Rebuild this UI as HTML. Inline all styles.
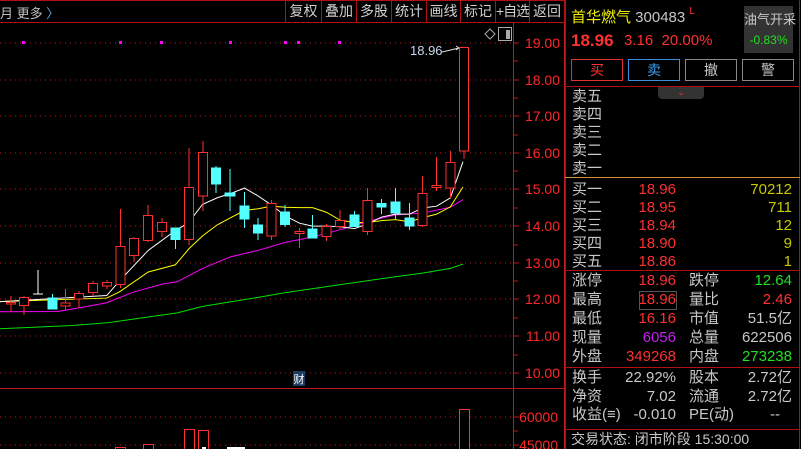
<!DOCTYPE html><html><head><meta charset="utf-8"><style>
*{margin:0;padding:0;box-sizing:border-box}
body{width:801px;height:449px;background:#000;overflow:hidden;position:relative;font-family:"Liberation Sans","Noto Sans CJK SC",sans-serif;color:#c8c8c8}
.a{position:absolute;white-space:nowrap}
.tb{position:absolute;top:1px;height:21px;border-left:1px solid #b01010;font-size:14px;line-height:21px;text-align:center;color:#d0d0d0;white-space:nowrap;overflow:hidden}
.r{color:#ff3030}.g{color:#20e020}.y{color:#c8c800}
.row{position:absolute;left:572px;font-size:15px;line-height:18px;white-space:nowrap}
.v{position:absolute;text-align:right;font-size:15px;line-height:18px;white-space:nowrap}
</style></head><body>
<div class="a" style="left:0;top:0;width:565px;height:1px;background:#b01010"></div>
<div class="a" style="left:0;top:22px;width:565px;height:1px;background:#b01010"></div>
<div class="a" style="left:0;top:3px;font-size:13px;color:#c0c0c0">月 更多 <span style="color:#6aa0e0">〉</span></div>
<div class="tb" style="left:285px;width:36px">复权</div>
<div class="tb" style="left:321px;width:35px">叠加</div>
<div class="tb" style="left:356px;width:35px">多股</div>
<div class="tb" style="left:391px;width:35px">统计</div>
<div class="tb" style="left:426px;width:34px">画线</div>
<div class="tb" style="left:460px;width:35px">标记</div>
<div class="tb" style="left:495px;width:34px;letter-spacing:-1px">+自选</div>
<div class="tb" style="left:529px;width:36px;border-right:1px solid #b01010">返回</div>
<svg class="a" style="left:0;top:0" width="565" height="449">
<g stroke="#c01818" stroke-dasharray="1 4" stroke-width="1">
<line x1="0" y1="43" x2="513" y2="43"/><line x1="0" y1="80" x2="513" y2="80"/><line x1="0" y1="116" x2="513" y2="116"/><line x1="0" y1="153" x2="513" y2="153"/><line x1="0" y1="189" x2="513" y2="189"/><line x1="0" y1="226" x2="513" y2="226"/><line x1="0" y1="263" x2="513" y2="263"/><line x1="0" y1="299" x2="513" y2="299"/><line x1="0" y1="336" x2="513" y2="336"/><line x1="0" y1="373" x2="513" y2="373"/><line x1="0" y1="417" x2="513" y2="417"/><line x1="0" y1="445" x2="513" y2="445"/></g>
<line x1="513.5" y1="22" x2="513.5" y2="449" stroke="#c01818"/>
<line x1="564.5" y1="22" x2="564.5" y2="449" stroke="#c01818"/>
<line x1="0" y1="388.5" x2="565" y2="388.5" stroke="#c01818"/>
<g stroke="#c01818">
<line x1="514" y1="43" x2="519" y2="43"/><line x1="514" y1="61" x2="518" y2="61"/><line x1="514" y1="80" x2="519" y2="80"/><line x1="514" y1="98" x2="518" y2="98"/><line x1="514" y1="116" x2="519" y2="116"/><line x1="514" y1="135" x2="518" y2="135"/><line x1="514" y1="153" x2="519" y2="153"/><line x1="514" y1="171" x2="518" y2="171"/><line x1="514" y1="189" x2="519" y2="189"/><line x1="514" y1="208" x2="518" y2="208"/><line x1="514" y1="226" x2="519" y2="226"/><line x1="514" y1="245" x2="518" y2="245"/><line x1="514" y1="263" x2="519" y2="263"/><line x1="514" y1="281" x2="518" y2="281"/><line x1="514" y1="299" x2="519" y2="299"/><line x1="514" y1="318" x2="518" y2="318"/><line x1="514" y1="336" x2="519" y2="336"/><line x1="514" y1="355" x2="518" y2="355"/><line x1="514" y1="373" x2="519" y2="373"/><line x1="514" y1="417" x2="519" y2="417"/><line x1="514" y1="431" x2="518" y2="431"/><line x1="514" y1="445" x2="519" y2="445"/></g>
<g fill="#ff2828" font-size="14" font-family="Liberation Sans" text-anchor="end">
<text x="560" y="48">19.00</text><text x="560" y="85">18.00</text><text x="560" y="121">17.00</text><text x="560" y="158">16.00</text><text x="560" y="194">15.00</text><text x="560" y="231">14.00</text><text x="560" y="268">13.00</text><text x="560" y="304">12.00</text><text x="560" y="341">11.00</text><text x="560" y="378">10.00</text><text x="558" y="422">60000</text><text x="558" y="450">45000</text></g>
<g fill="#ff00ff"><rect x="22" y="41" width="3" height="3"/><rect x="119" y="41" width="3" height="3"/><rect x="160" y="41" width="3" height="3"/><rect x="229" y="41" width="3" height="3"/><rect x="284" y="41" width="3" height="3"/><rect x="297" y="41" width="3" height="3"/><rect x="338" y="41" width="3" height="3"/></g>
<path d="M485 34l5-5 5 5-5 5z" fill="none" stroke="#aaa"/>
<rect x="498.5" y="27.5" width="13" height="13" fill="none" stroke="#aaa"/><rect x="506" y="30" width="4" height="9" fill="#aaa"/>
<text x="410" y="55" fill="#c8d8f0" font-size="13" font-family="Liberation Sans">18.96</text>
<path d="M442 52L459 48M456 46l3 2-3 2" stroke="#ddd" fill="none"/>
<g transform="translate(0,140) scale(0.3617)" fill="none">
<polyline vector-effect="non-scaling-stroke" stroke="#00e000" points="0,522 200,513 300,505 490,478 560,460 714,435 789,422 941,400 1093,378 1168,368 1245,355 1280,343"/>
<polyline vector-effect="non-scaling-stroke" stroke="#ff00ff" points="0,475 160,474 230,462 295,450 370,420 450,398 490,392 560,355 637,323 714,305 789,283 864,268 941,248 1016,225 1093,207 1168,202 1245,186 1280,165"/>
<polyline vector-effect="non-scaling-stroke" stroke="#ffff00" points="0,447 295,437 330,420 410,365 485,345 523,300 560,265 600,235 637,215 676,195 714,190 751,183 789,186 828,187 864,187 903,200 941,222 980,228 1016,228 1055,223 1093,220 1132,226 1168,215 1207,205 1245,185 1280,130"/>
<polyline vector-effect="non-scaling-stroke" stroke="#ffffff" points="0,447 295,430 330,390 410,305 485,250 520,230 560,178 600,160 637,148 676,133 714,155 751,180 789,210 828,230 864,238 903,238 941,240 980,245 1016,232 1055,213 1093,205 1132,205 1168,188 1207,183 1245,160 1280,60"/>
</g>
<g stroke="#ff3030" fill="#000">
<line x1="11" y1="296" x2="11" y2="312"/><rect x="6.5" y="302.5" width="9" height="1.5"/>
<line x1="24" y1="296" x2="24" y2="315"/><rect x="19.5" y="297.5" width="9" height="8"/>
<line x1="65.5" y1="289" x2="65.5" y2="310"/><rect x="61" y="303" width="9" height="3"/>
<line x1="79" y1="291" x2="79" y2="308"/><rect x="74.5" y="293.5" width="9" height="5.5"/>
<line x1="93" y1="281" x2="93" y2="296"/><rect x="88.5" y="283.5" width="9" height="9"/>
<line x1="107" y1="280" x2="107" y2="289"/><rect x="102.5" y="282.5" width="9" height="3.5"/>
<line x1="120.5" y1="209" x2="120.5" y2="288"/><rect x="116" y="246.5" width="9" height="38"/>
<line x1="134" y1="237" x2="134" y2="262"/><rect x="129.5" y="238.5" width="9" height="17"/>
<line x1="148" y1="205" x2="148" y2="242"/><rect x="143.5" y="215.5" width="9" height="25"/>
<line x1="162" y1="218" x2="162" y2="237"/><rect x="157.5" y="222.5" width="9" height="9"/>
<line x1="189" y1="148" x2="189" y2="245"/><rect x="184.5" y="187.5" width="9" height="52"/>
<line x1="203" y1="141" x2="203" y2="211"/><rect x="198.5" y="152.5" width="9" height="43.5"/>
<line x1="271.5" y1="200" x2="271.5" y2="240"/><rect x="267" y="203.5" width="9" height="32.5"/>
<line x1="299.5" y1="228" x2="299.5" y2="248"/><rect x="295" y="231.5" width="9" height="2"/>
<line x1="326.5" y1="224" x2="326.5" y2="241"/><rect x="322" y="226.5" width="9" height="10"/>
<line x1="340" y1="210" x2="340" y2="229"/><rect x="335.5" y="220.5" width="9" height="6"/>
<line x1="367.5" y1="188" x2="367.5" y2="235"/><rect x="363" y="200.5" width="9" height="31"/>
<line x1="422.5" y1="176" x2="422.5" y2="227"/><rect x="418" y="193.5" width="9" height="32"/>
<line x1="436.5" y1="157" x2="436.5" y2="191"/><rect x="432" y="185.5" width="9" height="2"/>
<line x1="450.5" y1="151" x2="450.5" y2="198"/><rect x="446" y="162.5" width="9" height="25.5"/>
<line x1="464" y1="151" x2="464" y2="159"/><rect x="459.5" y="47.5" width="9" height="103.5"/>
</g>
<g stroke="#54ffff" fill="#54ffff">
<line x1="52.5" y1="294" x2="52.5" y2="309"/><rect x="48" y="298" width="9" height="11"/>
<line x1="175.5" y1="228" x2="175.5" y2="249"/><rect x="171" y="228" width="9" height="11.5"/>
<line x1="216" y1="166" x2="216" y2="193"/><rect x="211.5" y="168" width="9" height="16"/>
<line x1="230" y1="169" x2="230" y2="211"/><rect x="225" y="193" width="10" height="3"/>
<line x1="244.5" y1="192" x2="244.5" y2="228"/><rect x="240" y="206" width="9" height="13"/>
<line x1="258" y1="218" x2="258" y2="240"/><rect x="253.5" y="225" width="9" height="8"/>
<line x1="285" y1="205" x2="285" y2="227"/><rect x="280.5" y="212" width="9" height="12.5"/>
<line x1="312.5" y1="215" x2="312.5" y2="238"/><rect x="308" y="229" width="9" height="9"/>
<line x1="354.5" y1="211" x2="354.5" y2="227"/><rect x="350" y="215" width="9" height="11.5"/>
<line x1="381.5" y1="199" x2="381.5" y2="214"/><rect x="377" y="203.5" width="9" height="3.5"/>
<line x1="395.5" y1="188" x2="395.5" y2="219"/><rect x="391" y="202" width="9" height="11"/>
<line x1="409.5" y1="203" x2="409.5" y2="230"/><rect x="405" y="218" width="9" height="8"/>
</g>
<path d="M38 270V294M33 294H43" stroke="#fff"/>
<rect x="293" y="371" width="12" height="15" fill="#1a3a60"/>
<text x="299" y="383" fill="#fff" font-size="11" text-anchor="middle" font-family="Noto Sans CJK SC">财</text>
<g stroke="#ff3030" fill="#000">
<rect x="115.5" y="447.5" width="10" height="5"/><rect x="143.5" y="444.5" width="10" height="8"/><rect x="184.5" y="429.5" width="10" height="23"/><rect x="198.5" y="430.5" width="10" height="22"/><rect x="459.5" y="409.5" width="10" height="43"/></g>
<rect x="202" y="447" width="4" height="3" fill="#fff"/><rect x="227" y="447" width="18" height="3" fill="#fff"/>
</svg>

<div class="a" style="left:565px;top:0;width:1px;height:449px;background:#b01010"></div>
<div class="a" style="left:799px;top:0;width:1px;height:449px;background:#b01010"></div>
<div class="a" style="left:565px;top:86px;width:235px;height:1px;background:#b01010"></div>
<div class="a" style="left:565px;top:177px;width:235px;height:1px;background:#d09040"></div>
<div class="a" style="left:565px;top:270px;width:235px;height:1px;background:#b01010"></div>
<div class="a" style="left:565px;top:367px;width:235px;height:1px;background:#b01010"></div>
<div class="a" style="left:565px;top:429px;width:235px;height:1px;background:#b01010"></div>
<div class="a" style="left:571px;top:6px;font-size:15px;color:#f0f000">首华燃气 <span style="color:#c8c8c8">300483</span> <span class="r" style="font-size:10px;vertical-align:top">L</span></div>
<div class="a" style="left:744px;top:6px;width:49px;height:47px;background:#333"></div>
<div class="a" style="left:744px;top:9px;width:49px;text-align:center;font-size:13px;color:#c8c8c8">油气开采</div>
<div class="a g" style="left:744px;top:33px;width:49px;text-align:center;font-size:12px">-0.83%</div>
<div class="a r" style="left:571px;top:31px;font-size:17px;font-weight:bold">18.96</div>
<div class="a r" style="left:624px;top:32px;font-size:15px">3.16&nbsp;&nbsp;20.00%</div>
<div class="a r" style="left:571px;top:59px;width:52px;height:22px;border:1px solid #e03030;text-align:center;font-size:14px;line-height:20px">买</div>
<div class="a" style="left:628px;top:59px;width:52px;height:22px;border:1px solid #3a8ee0;text-align:center;font-size:14px;line-height:20px;color:#3a9ef0">卖</div>
<div class="a" style="left:685px;top:59px;width:52px;height:22px;border:1px solid #888;text-align:center;font-size:14px;line-height:20px">撤</div>
<div class="a" style="left:742px;top:59px;width:52px;height:22px;border:1px solid #888;text-align:center;font-size:14px;line-height:20px">警</div>
<div class="a" style="left:658px;top:87px;width:46px;height:12px;background:#333;border-radius:0 0 4px 4px;text-align:center;color:#ff3030;font-size:9px;line-height:10px">⌄</div>
<div class="row" style="top:88px">卖五</div><div class="row" style="top:106px">卖四</div><div class="row" style="top:124px">卖三</div><div class="row" style="top:142px">卖二</div><div class="row" style="top:160px">卖一</div>
<div class="row" style="top:181px">买一</div><div class="row" style="top:199px">买二</div><div class="row" style="top:217px">买三</div><div class="row" style="top:235px">买四</div><div class="row" style="top:253px">买五</div>
<div class="v r" style="left:610px;width:66px;top:181px">18.96</div><div class="v r" style="left:610px;width:66px;top:199px">18.95</div><div class="v r" style="left:610px;width:66px;top:217px">18.94</div><div class="v r" style="left:610px;width:66px;top:235px">18.90</div><div class="v r" style="left:610px;width:66px;top:253px">18.86</div>
<div class="v y" style="left:720px;width:72px;top:181px">70212</div><div class="v y" style="left:720px;width:72px;top:199px">711</div><div class="v y" style="left:720px;width:72px;top:217px">12</div><div class="v y" style="left:720px;width:72px;top:235px">9</div><div class="v y" style="left:720px;width:72px;top:253px">1</div>
<div class="row" style="top:272px">涨停</div><div class="row" style="top:291px">最高</div><div class="row" style="top:310px">最低</div><div class="row" style="top:329px">现量</div><div class="row" style="top:348px">外盘</div>
<div class="row" style="left:689px;top:272px">跌停</div><div class="row" style="left:689px;top:291px">量比</div><div class="row" style="left:689px;top:310px">市值</div><div class="row" style="left:689px;top:329px">总量</div><div class="row" style="left:689px;top:348px">内盘</div>
<div class="a" style="left:639px;top:291px;width:38px;height:19px;border:1px solid #555"></div>
<div class="v r" style="left:600px;width:76px;top:272px">18.96</div><div class="v r" style="left:600px;width:76px;top:291px">18.96</div><div class="v r" style="left:600px;width:76px;top:310px">16.16</div><div class="v" style="left:600px;width:76px;top:329px;color:#c020f0">6056</div><div class="v r" style="left:600px;width:76px;top:348px">349268</div>
<div class="v g" style="left:720px;width:72px;top:272px">12.64</div><div class="v r" style="left:720px;width:72px;top:291px">2.46</div><div class="v" style="left:720px;width:72px;top:310px">51.5亿</div><div class="v" style="left:720px;width:72px;top:329px">622506</div><div class="v g" style="left:720px;width:72px;top:348px">273238</div>
<div class="row" style="top:369px">换手</div><div class="row" style="top:388px">净资</div><div class="row" style="top:406px">收益(≡)</div>
<div class="row" style="left:689px;top:369px">股本</div><div class="row" style="left:689px;top:388px">流通</div><div class="row" style="left:689px;top:406px">PE(动)</div>
<div class="v" style="left:600px;width:76px;top:369px">22.92%</div><div class="v" style="left:600px;width:76px;top:388px">7.02</div><div class="v" style="left:600px;width:76px;top:406px">-0.010</div>
<div class="v" style="left:720px;width:72px;top:369px">2.72亿</div><div class="v" style="left:720px;width:72px;top:388px">2.72亿</div><div class="v" style="left:720px;width:60px;top:406px">--</div>
<div class="row" style="left:571px;top:430px;font-size:14px">交易状态: 闭市阶段 15:30:00</div>
</body></html>
